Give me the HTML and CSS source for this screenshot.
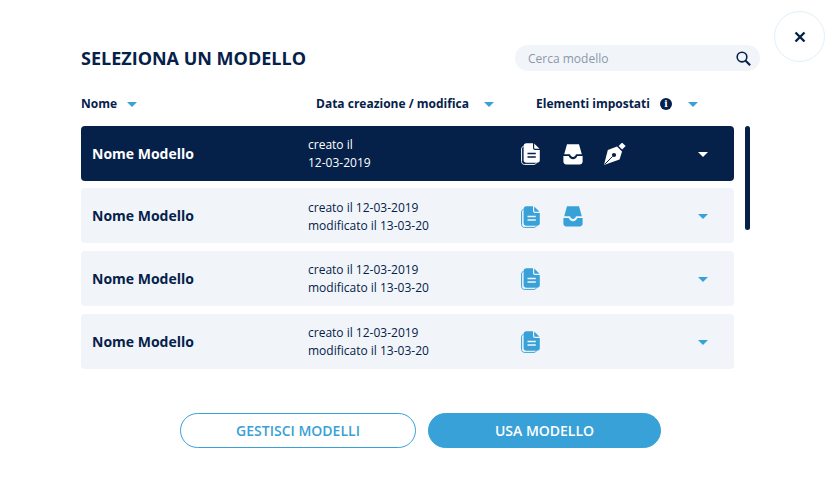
FILE: index.html
```html
<!DOCTYPE html>
<html lang="it">
<head>
<meta charset="UTF-8" />
<meta name="viewport" content="width=device-width, initial-scale=1.0">
<title>Seleziona un modello</title>
<link rel="stylesheet" href="styles.css">
</head>
<body>

<svg class="defs" width="0" height="0">
  <symbol id="i-doc" viewBox="0 0 20 22">
    <path fill="none" stroke="currentColor" stroke-width="1" d="M2.500 3.500C1.200 3.800.6 4.600.6 5.800V18.500C.6 20.200 1.700 21.400 3.400 21.400H13C14.200 21.400 15 20.800 15.400 19.700"/>
    <path fill="currentColor" d="M5.400.3H12V5C12 6.300 12.900 7 14 7H18.800V16.900C18.800 18.600 17.700 19.700 16 19.700H5.400C3.700 19.700 2.600 18.600 2.600 16.900V3.100C2.600 1.400 3.700.3 5.400.3Z"/>
    <path fill="currentColor" d="M13.200.6 18.500 5.800H14.200C13.600 5.800 13.200 5.400 13.200 4.800Z"/>
    <path fill="none" stroke="var(--cut)" stroke-width="1.500" d="M6.500 10.500H14.800M6.500 14H14.800"/>
  </symbol>
  <symbol id="i-tray" viewBox="0 0 20 21">
    <path fill="currentColor" d="M4 .3H16L18.800 10.200H13.500C13.100 10.200 12.800 10.500 12.700 10.800 12.400 12.100 11.300 12.900 10 12.900 8.700 12.900 7.600 12.100 7.300 10.800 7.200 10.500 6.900 10.200 6.500 10.200H1.200Z"/>
    <path fill="currentColor" d="M.4 12H5.700C6.300 14 8 15.200 10 15.200 12 15.200 13.700 14 14.300 12H19.600V17.500C19.600 19.300 18.500 20.400 16.700 20.400H3.300C1.500 20.400.4 19.300.4 17.500Z"/>
  </symbol>
  <symbol id="i-pen" viewBox="0 0 22 22">
    <path fill="currentColor" d="M18 -.4 21.600 3.100 18.100 6.600 14.600 3Z"/>
    <path fill="currentColor" d="M13 3.600 18 8.600 15.500 16.500 0 22 3.800 7Z"/>
    <path fill="none" stroke="var(--cut)" stroke-width="1" d="M.6 21.400 8.600 13.400"/>
    <circle cx="10" cy="12" r="2.100" fill="var(--cut)"/>
  </symbol>
</svg>

<button class="close" aria-label="Chiudi">
  <svg width="12" height="12" viewBox="0 0 12 12"><path d="M1.500 1.500 10.500 10.500M10.500 1.500 1.500 10.500" stroke="#05214a" stroke-width="2.400" fill="none"/></svg>
</button>

<main class="modal">
  <header class="top">
    <h1>SELEZIONA UN MODELLO</h1>
    <div class="search">
      <span>Cerca modello</span>
      <svg width="15" height="15" viewBox="0 0 14 14"><circle cx="5.600" cy="5.600" r="4.500" fill="none" stroke="#05214a" stroke-width="1.500"/><path d="M9 9 13.200 13.200" stroke="#05214a" stroke-width="2" fill="none"/></svg>
    </div>
  </header>

  <div class="cols">
    <div class="col col-name">Nome <i class="caret"></i></div>
    <div class="col col-date">Data creazione / modifica <i class="caret"></i></div>
    <div class="col col-set">Elementi impostati <b class="info">i</b> <i class="caret"></i></div>
  </div>

  <div class="body">
    <ul class="list">
      <li class="row active">
        <strong>Nome Modello</strong>
        <p>creato il<br>12-03-2019</p>
        <div class="icons">
          <svg class="ic-doc"><use href="#i-doc"/></svg>
          <svg class="ic-tray"><use href="#i-tray"/></svg>
          <svg class="ic-pen"><use href="#i-pen"/></svg>
        </div>
        <i class="caret"></i>
      </li>
      <li class="row">
        <strong>Nome Modello</strong>
        <p>creato il 12-03-2019<br>modificato il 13-03-20</p>
        <div class="icons">
          <svg class="ic-doc"><use href="#i-doc"/></svg>
          <svg class="ic-tray"><use href="#i-tray"/></svg>
        </div>
        <i class="caret"></i>
      </li>
      <li class="row">
        <strong>Nome Modello</strong>
        <p>creato il 12-03-2019<br>modificato il 13-03-20</p>
        <div class="icons">
          <svg class="ic-doc"><use href="#i-doc"/></svg>
        </div>
        <i class="caret"></i>
      </li>
      <li class="row">
        <strong>Nome Modello</strong>
        <p>creato il 12-03-2019<br>modificato il 13-03-20</p>
        <div class="icons">
          <svg class="ic-doc"><use href="#i-doc"/></svg>
        </div>
        <i class="caret"></i>
      </li>
    </ul>
    <div class="scrollbar"></div>
  </div>

  <footer class="actions">
    <button class="btn btn-line">GESTISCI MODELLI</button>
    <button class="btn btn-full">USA MODELLO</button>
  </footer>
</main>

</body>
</html>
```

FILE: styles.css
```css
/* page */
body
{
  margin: 0;
  background: #fff;
  color: #05214a;
  font-family: "Open Sans", sans-serif;
}
.defs
{
  position: absolute;
}
/* close button, floats over the corner */
.close
{
  position: absolute;
  left: 774px;
  top: 11px;
  width: 51px;
  height: 51px;
  border: 1px solid #e2eff7;
  border-radius: 50%;
  background: #fff;
  display: flex;
  align-items: center;
  justify-content: center;
  padding: 0;
}
.modal
{
  padding: 45px 0 0 81px;
  width: 679px;
}
/* title and search */
.top
{
  display: flex;
  justify-content: space-between;
  align-items: center;
  height: 26px;
}
h1
{
  margin: 0;
  font-size: 18px;
  font-weight: 700;
  line-height: 26px;
}
.search
{
  width: 245px;
  height: 26px;
  box-sizing: border-box;
  padding: 0 9px 0 13px;
  border-radius: 13px;
  background: #f1f5f9;
  display: flex;
  align-items: center;
  justify-content: space-between;
  font-size: 12px;
  color: #8a97ab;
}
/* column headers */
.cols
{
  display: grid;
  grid-template-columns: 235px 220px 1fr;
  height: 20px;
  margin-top: 23px;
  font-size: 12px;
  font-weight: 700;
  line-height: 20px;
}
.col
{
  display: flex;
  align-items: center;
}
.col .caret
{
  margin-left: 15px;
}
.col-name .caret
{
  margin-left: 10px;
}
.col-set .caret
{
  margin-left: 16px;
}
.info
{
  width: 12px;
  height: 12px;
  margin-left: 10px;
  border-radius: 50%;
  background: #05214a;
  color: #fff;
  font-family: "DejaVu Serif", serif;
  font-size: 9px;
  line-height: 12px;
  text-align: center;
}
.caret
{
  display: block;
  width: 0;
  height: 0;
  border-left: 5.500px solid transparent;
  border-right: 5.500px solid transparent;
  border-top: 5px solid #38a1d8;
}
/* model list */
.body
{
  display: flex;
  gap: 11px;
  margin-top: 11.600px;
  align-items: flex-start;
}
.list
{
  list-style: none;
  margin: 0;
  padding: 0;
  width: 653px;
  display: flex;
  flex-direction: column;
  gap: 7.670px;
}
.row
{
  height: 55px;
  box-sizing: border-box;
  padding: 0 25px 0 11px;
  display: grid;
  grid-template-columns: 216px 213px 1fr 11px;
  align-items: center;
  border-radius: 4px;
  background: #f1f5f9;
}
.row strong
{
  font-size: 14px;
  font-weight: 700;
}
.row p
{
  margin: 0;
  padding-top: 2px;
  font-size: 12px;
  line-height: 18px;
}
.row .caret
{
  margin-top: 2px;
}
.icons
{
  display: flex;
  align-items: center;
  margin-top: 2px;
  color: #38a1d8;
  --cut: #f1f5f9;
}
.ic-doc
{
  width: 20px;
  height: 22px;
  margin-right: 22px;
}
.ic-tray
{
  width: 20px;
  height: 21px;
  margin-right: 21px;
}
.ic-pen
{
  width: 22px;
  height: 22px;
  overflow: visible;
}
/* selected row */
.active
{
  background: #05214a;
  color: #fff;
}
.active .icons
{
  color: #fff;
  --cut: #05214a;
}
.active .caret
{
  border-top-color: #fff;
}
.scrollbar
{
  width: 5px;
  height: 104px;
  border-radius: 3px;
  background: #05214a;
}
/* bottom buttons */
.actions
{
  display: flex;
  gap: 12px;
  margin-top: 44px;
  padding-left: 99px;
}
.btn
{
  height: 35px;
  border-radius: 18px;
  border: 1px solid #38a1d8;
  font-family: "Open Sans", sans-serif;
  font-size: 14px;
  font-weight: 600;
  padding: 0;
}
.btn-line
{
  width: 236px;
  background: #fff;
  color: #38a1d8;
}
.btn-full
{
  width: 233px;
  background: #38a1d8;
  color: #fff;
}
```
